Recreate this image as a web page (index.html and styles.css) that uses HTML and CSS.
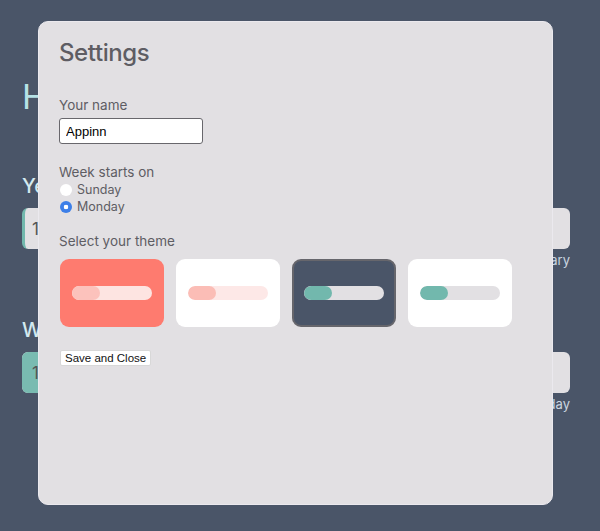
FILE: index.html
```html
<!DOCTYPE html>
<html lang="en">
<head>
    <meta charset="UTF-8">
    <meta name="viewport" content="width=device-width, initial-scale=1.0">
    <title>Progress</title>
    <link rel="stylesheet" href="styles.css">
</head>
<body>
    <main class="page">
        <h1 class="greeting">Hello, Appinn</h1>

        <section class="block">
            <h2 class="block-title">Year progress</h2>
            <div class="bar-card year">
                <span class="bar-value">13%</span>
            </div>
            <p class="bar-note">February</p>
        </section>

        <section class="block">
            <h2 class="block-title">Week progress</h2>
            <div class="bar-card week">
                <div class="bar-fill" style="width: 14%"></div>
                <span class="bar-value">14%</span>
            </div>
            <p class="bar-note">Monday</p>
        </section>
    </main>

    <div class="modal">
        <h1 class="modal-title">Settings</h1>

        <form class="settings-form">
            <label class="field-label" for="name">Your name</label>
            <input class="name-input" type="text" id="name" value="Appinn">

            <p class="field-label week-label">Week starts on</p>
            <label class="radio-row"><input type="radio" name="week" value="sunday"> Sunday</label>
            <label class="radio-row"><input type="radio" name="week" value="monday" checked> Monday</label>

            <p class="field-label theme-label">Select your theme</p>
            <div class="themes">
                <div class="theme theme-coral">
                    <div class="track"><div class="fill"></div></div>
                </div>
                <div class="theme theme-light">
                    <div class="track"><div class="fill"></div></div>
                </div>
                <div class="theme theme-dark selected">
                    <div class="track"><div class="fill"></div></div>
                </div>
                <div class="theme theme-mint">
                    <div class="track"><div class="fill"></div></div>
                </div>
            </div>

            <button class="save-btn" type="button">Save and Close</button>
        </form>
    </div>
</body>
</html>
```

FILE: styles.css
```css
body {
    margin: 0;
    padding: 0;
    background-color: #4a5568;
    font-family: Inter, "Noto Sans", sans-serif;
    height: 100vh;
    overflow: hidden;
}
.page {
    padding: 74px 30px 0 22px;
}
.greeting {
    margin: 0;
    font-size: 34px;
    font-weight: 400;
    line-height: 46px;
    color: #b6e2e6;
    white-space: nowrap;
}
.block {
    margin-top: 54px;
}
.block + .block {
    margin-top: 50px;
}
.block-title {
    margin: 0 0 10px;
    font-size: 20px;
    font-weight: 500;
    line-height: 24px;
    color: #d3e9ef;
}
.bar-card {
    position: relative;
    height: 41px;
    background-color: #e2e0e3;
    border-radius: 6px;
    overflow: hidden;
    display: flex;
    align-items: center;
    padding-left: 10px;
}
.bar-card.year {
    border-left: 3px solid #72b8ad;
    padding-left: 7px;
}
.bar-fill {
    position: absolute;
    left: 0;
    top: 0;
    bottom: 0;
    background-color: #79bbb1;
}
.bar-value {
    position: relative;
    font-size: 17px;
    color: #555;
}
.bar-note {
    margin: 3px 0 0;
    text-align: right;
    font-size: 13px;
    color: #cbd5e0;
}

.modal {
    position: fixed;
    left: 38px;
    top: 21px;
    width: 473px;
    height: 468px;
    padding: 14px 20px 0 20px;
    background-color: #e2e0e3;
    border: 1px solid #ebe9ee;
    border-radius: 10px;
    color: #5e5d63;
}
.modal-title {
    margin: 0;
    font-size: 24px;
    font-weight: 500;
    letter-spacing: -0.4px;
    line-height: 34px;
}
.settings-form {
    display: flex;
    flex-direction: column;
    align-items: flex-start;
}
.field-label {
    margin: 0;
    font-size: 13.5px;
    line-height: 18px;
}
label.field-label {
    margin-top: 26px;
}
.name-input {
    margin-top: 4px;
    width: 144px;
    height: 26px;
    box-sizing: border-box;
    border: 1px solid #68676c;
    border-radius: 3px;
    padding: 0 6px;
    font-family: "Liberation Sans", Arial, sans-serif;
    font-size: 13px;
    color: #000;
    background-color: #fff;
}
.week-label {
    margin-top: 19px;
}
.radio-row {
    display: flex;
    align-items: center;
    gap: 5px;
    font-size: 12.5px;
    line-height: 17px;
}
.radio-row input {
    appearance: none;
    margin: 0 0 0 1px;
    width: 12px;
    height: 12px;
    border-radius: 50%;
    background-color: #fff;
}
.radio-row input:checked {
    background: radial-gradient(circle, #fff 0 2px, #3d7fe8 2.6px);
}
.theme-label {
    margin-top: 17px;
}
.themes {
    display: flex;
    gap: 12px;
    margin-top: 9px;
    margin-left: 1px;
}
.theme {
    width: 104px;
    height: 68px;
    box-sizing: border-box;
    border-radius: 9px;
    display: flex;
    align-items: center;
    justify-content: center;
}
.track {
    width: 80px;
    height: 14px;
    border-radius: 7px;
    overflow: hidden;
}
.fill {
    width: 28px;
    height: 100%;
    border-radius: 7px;
}
.theme-coral {
    background-color: #fe7b6f;
}
.theme-coral .track {
    background-color: #fde4e1;
}
.theme-coral .fill {
    background-color: #fcc2bc;
}
.theme-light {
    background-color: #fff;
}
.theme-light .track {
    background-color: #fde8e7;
}
.theme-light .fill {
    background-color: #fbbdb6;
}
.theme-dark {
    background-color: #4a5568;
}
.theme-dark .track,
.theme-mint .track {
    background-color: #e2e0e3;
}
.theme-dark .fill,
.theme-mint .fill {
    background-color: #72b8ad;
}
.theme-mint {
    background-color: #fff;
}
.theme.selected {
    border: 2px solid #66666c;
}
.save-btn {
    margin-top: 23px;
    margin-left: 1px;
    padding: 0 4px;
    height: 16px;
    border: 1px solid #d8d8d8;
    border-radius: 2px;
    background-color: #fff;
    font-family: "Liberation Sans", Arial, sans-serif;
    font-size: 11.5px;
    line-height: 14px;
    color: #111;
}
```
